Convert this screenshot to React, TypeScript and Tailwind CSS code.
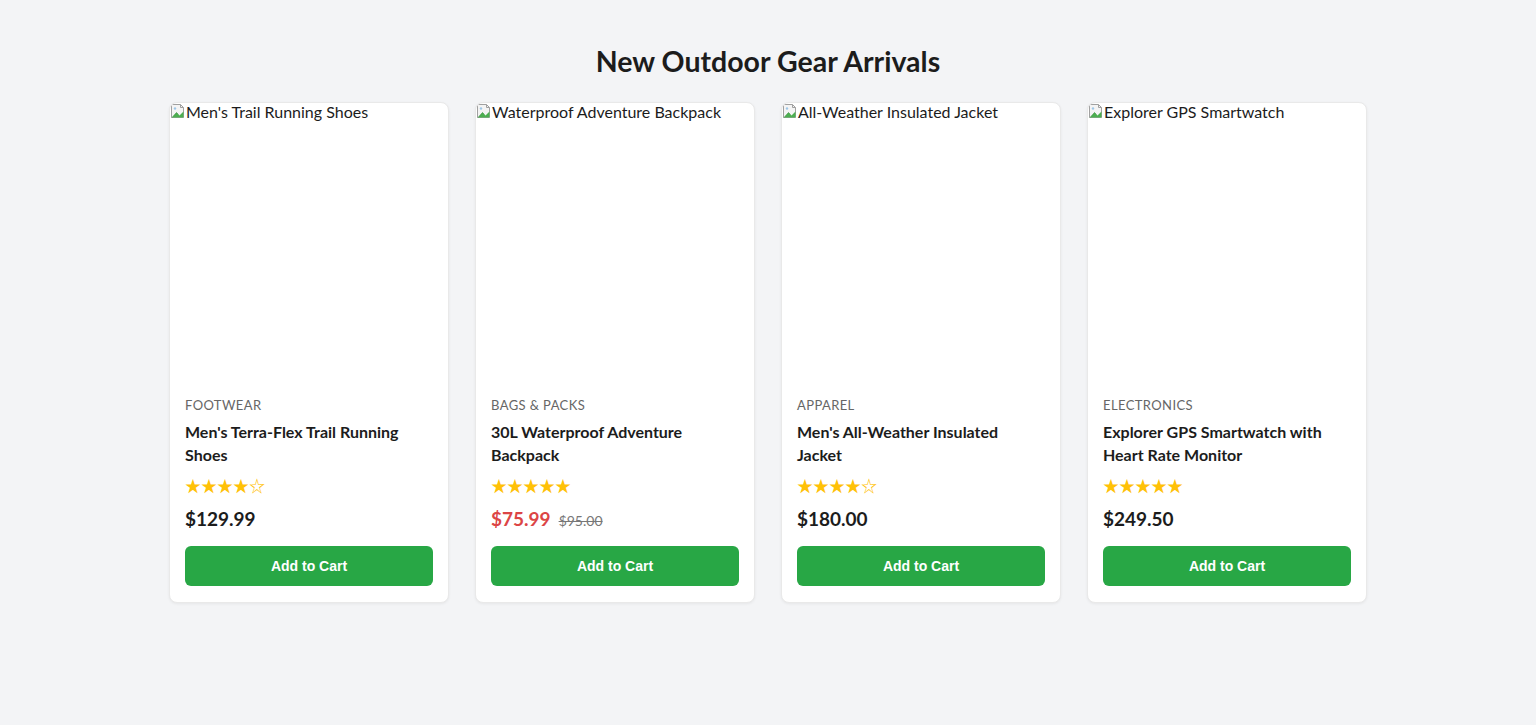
const products = [
  {
    alt: "Men's Trail Running Shoes",
    category: "Footwear",
    name: "Men's Terra-Flex Trail Running Shoes",
    rating: 4,
    price: "$129.99",
  },
  {
    alt: "Waterproof Adventure Backpack",
    category: "Bags & Packs",
    name: "30L Waterproof Adventure Backpack",
    rating: 5,
    price: "$75.99",
    oldPrice: "$95.00",
  },
  {
    alt: "All-Weather Insulated Jacket",
    category: "Apparel",
    name: "Men's All-Weather Insulated Jacket",
    rating: 4,
    price: "$180.00",
  },
  {
    alt: "Explorer GPS Smartwatch",
    category: "Electronics",
    name: "Explorer GPS Smartwatch with Heart Rate Monitor",
    rating: 5,
    price: "$249.50",
  },
];

const BrokenImage = () => (
  <svg width="16" height="16" viewBox="0 0 16 16" className="shrink-0">
    <path d="M1.5 1.5h9l3 3v10h-12z" fill="#f4f4f4" stroke="#a0a0a0" />
    <path d="M10.5 1.5v3h3" fill="none" stroke="#a0a0a0" />
    <path d="M2 14.5l4.5-5 3 3 4-4v6z" fill="#4caf50" />
    <path d="M2 14.5l4.5-5 2 2" fill="none" stroke="#3a8f3e" strokeWidth="0.6" />
    <circle cx="5" cy="5.5" r="1.2" fill="#9ec7e8" />
  </svg>
);

const Stars = ({ rating }: { rating: number }) => (
  <div className="text-[16px] leading-[22px] text-[#ffc107] font-['Noto_Sans_CJK_JP',sans-serif]">
    {"★".repeat(rating)}
    {"☆".repeat(5 - rating)}
  </div>
);

export default function App() {
  return (
    <div className="min-h-screen bg-[#f3f4f6] font-['Lato',sans-serif] text-[#1c1c1c]">
      <div className="pt-[40px] pb-10">
        <h1 className="text-center text-[28.5px] leading-[42px] font-bold">New Outdoor Gear Arrivals</h1>
        <div className="mt-[20px] flex justify-center gap-[26px]">
          {products.map((p) => (
            <div
              key={p.name}
              className="w-[280px] bg-white rounded-[8px] border border-[#e9e9e9] shadow-[0_1px_3px_rgba(0,0,0,0.06)] overflow-hidden flex flex-col"
            >
              <div className="h-[278px] flex items-start text-[16px] leading-[18px] text-[#1c1c1c]">
                <BrokenImage />
                <span>{p.alt}</span>
              </div>
              <div className="px-[15px] pt-[15px] pb-[16px] flex flex-col">
                <div className="text-[13px] leading-[18px] uppercase tracking-[0.4px] text-[#666]">
                  {p.category}
                </div>
                <div className="mt-[6px] text-[16px] leading-[23px] font-bold">{p.name}</div>
                <div className="mt-[8px]">
                  <Stars rating={p.rating} />
                </div>
                <div className="mt-[10px] flex items-baseline gap-[8px]">
                  <span className={`text-[19px] leading-[26px] font-bold ${p.oldPrice ? "text-[#dc4545]" : ""}`}>
                    {p.price}
                  </span>
                  {p.oldPrice && (
                    <span className="text-[14px] line-through text-[#777]">{p.oldPrice}</span>
                  )}
                </div>
                <button className="mt-[14px] h-[40px] w-full rounded-[6px] bg-[#28a745] text-white text-[14px] font-bold font-['Liberation_Sans',Arial,sans-serif]">
                  Add to Cart
                </button>
              </div>
            </div>
          ))}
        </div>
      </div>
    </div>
  );
}
